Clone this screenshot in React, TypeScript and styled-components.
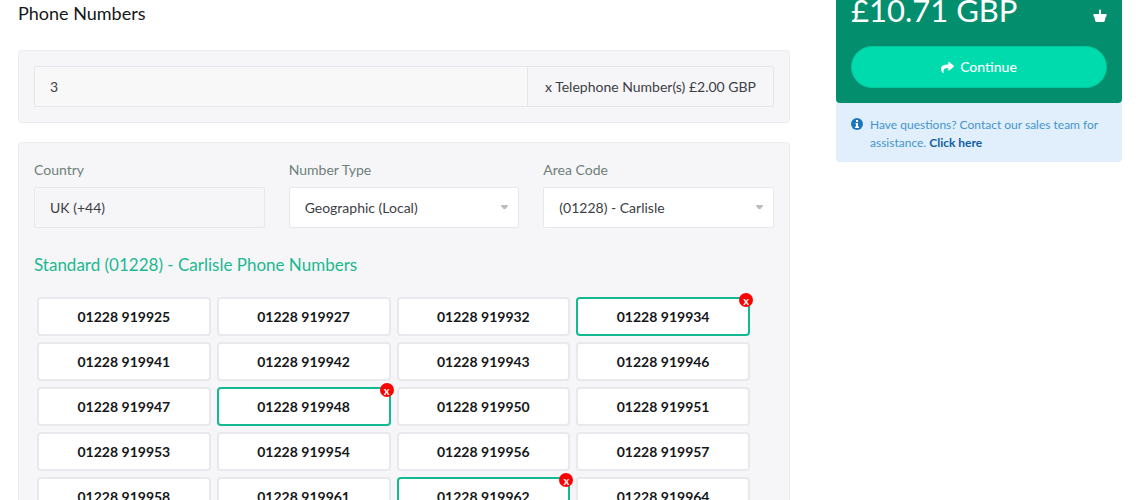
import { useState } from "react";
import styled, { createGlobalStyle } from "styled-components";
import { FaShare } from "react-icons/fa";

const GlobalStyle = createGlobalStyle`
  *, *::before, *::after { box-sizing: border-box; }
  body {
    margin: 0;
    background: #fff;
    color: #3d4045;
    font-family: Lato, "Liberation Sans", sans-serif;
    font-size: 14px;
    line-height: 20px;
  }
  button, input, select { font: inherit; color: inherit; }
  h2, h3, p { margin: 0; }
`;

const Page = styled.div`
  display: grid;
  grid-template-columns: minmax(0, 1fr) 286px;
  gap: 46px;
  align-items: start;
  padding: 0 18px;
`;

const Main = styled.main`
  display: flex;
  flex-direction: column;
  gap: 19px;
`;

const SectionTitle = styled.h2`
  padding: 1px 0 6px;
  font-size: 18px;
  line-height: 24px;
  font-weight: 400;
  color: #151719;
`;

const Panel = styled.section`
  padding: 15px;
  border: 1px solid #ececf0;
  border-radius: 4px;
  background: #f6f6f9;
`;

const QuantityGroup = styled.label`
  display: flex;
  height: 41px;
  border: 1px solid #e5e5eb;
  border-radius: 2px;
`;

const QuantityInput = styled.input`
  flex: 1;
  min-width: 0;
  padding: 0 15px;
  border: 0;
  background: #f8f8f8;
`;

const QuantityUnit = styled.span`
  display: flex;
  align-items: center;
  padding: 0 17px;
  border-left: 1px solid #e5e5eb;
`;

const Filters = styled.div`
  display: grid;
  grid-template-columns: repeat(3, minmax(0, 1fr));
  gap: 24px;
`;

const Field = styled.label`
  display: flex;
  flex-direction: column;
  gap: 7px;
  padding-top: 2px;
  color: #6f8078;
`;

const CountryInput = styled.input`
  width: 100%;
  height: 41px;
  padding: 0 15px;
  border: 1px solid #e8e8ec;
  border-radius: 2px;
  background: transparent;
  color: #3d4045;
`;

const SelectBox = styled.span`
  position: relative;
  display: flex;
`;

const Select = styled.select`
  width: 100%;
  height: 41px;
  padding: 0 32px 0 15px;
  border: 1px solid #e8e8ec;
  border-radius: 2px;
  background: #fff;
  color: #3d4045;
  appearance: none;
`;

const Caret = styled.svg`
  position: absolute;
  top: 18px;
  right: 11px;
  fill: #b9bfbf;
  pointer-events: none;
`;

const GroupTitle = styled.h3`
  padding: 25px 0 20px;
  font-size: 17px;
  line-height: 24px;
  font-weight: 400;
  color: #1cb890;
`;

const NumberGrid = styled.div`
  display: grid;
  grid-template-columns: repeat(4, minmax(0, 1fr));
  gap: 6px;
  padding: 0 24px 0 3px;
`;

const NumberCell = styled.div`
  position: relative;
  display: flex;
`;

const NumberButton = styled.button<{ $selected: boolean }>`
  width: 100%;
  height: 39px;
  padding: 0;
  border: 2px solid ${(p) => (p.$selected ? "#12b991" : "#e8e8ed")};
  border-radius: 4px;
  background: #fff;
  color: #151719;
  font-weight: 700;
  cursor: pointer;
`;

const RemoveButton = styled.button`
  position: absolute;
  top: -4px;
  right: -3px;
  width: 14px;
  height: 14px;
  padding: 0;
  border: 0;
  border-radius: 50%;
  background: #f00;
  color: #fff;
  font-size: 11px;
  line-height: 13px;
  font-weight: 700;
  cursor: pointer;
`;

const Summary = styled.aside`
  border-radius: 4px;
  background: #e1effc;
`;

const Total = styled.div`
  padding: 0 15px 15px;
  border-radius: 0 0 4px 4px;
  background: #038f6e;
  color: #fff;
`;

const PriceRow = styled.div`
  display: flex;
  justify-content: space-between;
  align-items: flex-end;
  height: 46px;
  padding-bottom: 24px;
`;

const Price = styled.span`
  font-size: 31px;
  line-height: 24px;
  font-weight: 400;
`;

const ContinueButton = styled.button`
  display: flex;
  justify-content: center;
  align-items: center;
  gap: 6px;
  width: 100%;
  height: 42px;
  border: 1px solid #03c79d;
  border-radius: 21px;
  background: #00dbae;
  color: #fff;
  font-weight: 500;
  cursor: pointer;
`;

const Help = styled.div`
  display: flex;
  gap: 7px;
  padding: 13px 16px 10px 15px;
  color: #4394cc;
  font-size: 12px;
  line-height: 18px;

  svg {
    flex: none;
    margin-top: 2px;
    color: #1d75bb;
  }
`;

const HelpLink = styled.a`
  color: #135f9f;
  font-weight: 700;
  text-decoration: none;
`;

const numbers = [
  "919925", "919927", "919932", "919934",
  "919941", "919942", "919943", "919946",
  "919947", "919948", "919950", "919951",
  "919953", "919954", "919956", "919957",
  "919958", "919961", "919962", "919964",
];

function BasketIcon() {
  return (
    <svg width="14" height="13" viewBox="0 0 14 13" fill="#fff" aria-hidden="true">
      <path d="M6 1Q6 .5 7 .5T8 1V5h5.500v2.500h-.7l-.9 4Q11.600 13 10.300 13H3.700Q2.400 13 2.100 11.500L1.200 7.500H.5V5H6z" />
    </svg>
  );
}

function InfoIcon() {
  return (
    <svg width="12" height="12" viewBox="0 0 12 12" aria-hidden="true">
      <circle cx="6" cy="6" r="6" fill="currentColor" />
      <path d="M5 2h2v2H5zM4.500 5H7v3.500h1V10H4V8.500h1V6.300h-.5z" fill="#fff" />
    </svg>
  );
}

function CaretIcon() {
  return (
    <Caret width="7" height="5" viewBox="0 0 7 5" aria-hidden="true">
      <path d="M0 0h7v1L4.500 4h-2L0 1z" />
    </Caret>
  );
}

export default function App() {
  const [selected, setSelected] = useState(["919934", "919948", "919962"]);
  const toggle = (n: string) =>
    setSelected((list) => (list.includes(n) ? list.filter((x) => x !== n) : [...list, n]));

  return (
    <>
      <GlobalStyle />
      <Page>
        <Main>
          <SectionTitle>Phone Numbers</SectionTitle>
          <Panel>
            <QuantityGroup>
              <QuantityInput value={selected.length} readOnly />
              <QuantityUnit>x Telephone Number(s) £2.00 GBP</QuantityUnit>
            </QuantityGroup>
          </Panel>
          <Panel>
            <Filters>
              <Field>
                Country
                <CountryInput value="UK (+44)" readOnly />
              </Field>
              <Field>
                Number Type
                <SelectBox>
                  <Select>
                    <option>Geographic (Local)</option>
                  </Select>
                  <CaretIcon />
                </SelectBox>
              </Field>
              <Field>
                Area Code
                <SelectBox>
                  <Select>
                    <option>(01228) - Carlisle</option>
                  </Select>
                  <CaretIcon />
                </SelectBox>
              </Field>
            </Filters>
            <GroupTitle>Standard (01228) - Carlisle Phone Numbers</GroupTitle>
            <NumberGrid>
              {numbers.map((n) => {
                const isSelected = selected.includes(n);
                return (
                  <NumberCell key={n}>
                    <NumberButton
                      type="button"
                      $selected={isSelected}
                      aria-pressed={isSelected}
                      onClick={() => toggle(n)}
                    >
                      01228 {n}
                    </NumberButton>
                    {isSelected && (
                      <RemoveButton type="button" onClick={() => toggle(n)}>
                        x
                      </RemoveButton>
                    )}
                  </NumberCell>
                );
              })}
            </NumberGrid>
          </Panel>
        </Main>
        <Summary>
          <Total>
            <PriceRow>
              <Price>£10.71 GBP</Price>
              <BasketIcon />
            </PriceRow>
            <ContinueButton type="button">
              <FaShare size={13} aria-hidden="true" />
              Continue
            </ContinueButton>
          </Total>
          <Help>
            <InfoIcon />
            <p>
              Have questions? Contact our sales team for assistance.{" "}
              <HelpLink href="#contact">Click here</HelpLink>
            </p>
          </Help>
        </Summary>
      </Page>
    </>
  );
}
